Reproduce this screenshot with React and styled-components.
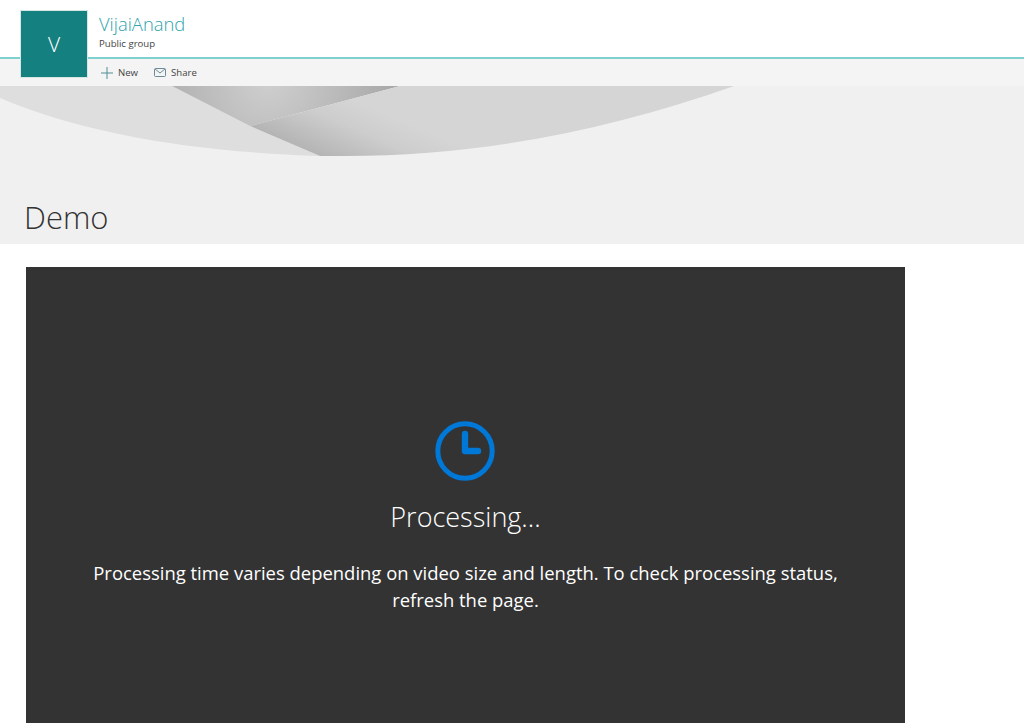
import React from 'react';
import styled, { createGlobalStyle } from 'styled-components';

const GlobalStyle = createGlobalStyle`
  html, body {
    margin: 0;
    height: 100%;
    overflow: hidden;
    background: #fff;
    font-family: "Open Sans", "Noto Sans", sans-serif;
  }
`;

const Page = styled.div`
  width: 1024px;
  height: 723px;
  overflow: hidden;
`;

const Header = styled.header`
  position: relative;
  background: #fff;
`;
const TitleRow = styled.div`
  box-sizing: border-box;
  height: 59px;
  padding: 12px 0 0 99px;
  border-bottom: 2px solid #7fd0cf;
`;
const GroupName = styled.div`
  font-size: 18.4px;
  font-weight: 300;
  line-height: 23px;
  color: #2ea3ac;
`;
const GroupType = styled.div`
  font-size: 9.6px;
  line-height: 14px;
  margin-top: 2px;
  color: #444;
`;
const Logo = styled.div`
  position: absolute;
  left: 20px;
  top: 10px;
  width: 68px;
  height: 68px;
  box-sizing: border-box;
  border: 1px solid #d5e6e5;
  background: #158080;
  color: #fff;
  font-size: 21px;
  font-weight: 300;
  display: flex;
  align-items: center;
  justify-content: center;
`;
const Toolbar = styled.div`
  height: 27px;
  display: flex;
  align-items: center;
  gap: 16px;
  padding-left: 101px;
  background: #f4f4f4;
`;
const ToolButton = styled.div`
  display: flex;
  align-items: center;
  gap: 5px;
  font-size: 9.6px;
  color: #444;
`;

const Banner = styled.section`
  position: relative;
  height: 158px;
  box-sizing: border-box;
  background: #f0f0f0;
  display: flex;
  align-items: flex-end;
  padding: 0 0 6px 24px;
`;
const BannerArt = styled.svg`
  position: absolute;
  left: 0;
  top: 0;
`;
const PageTitle = styled.h1`
  position: relative;
  margin: 0;
  font-size: 31px;
  font-weight: 300;
  line-height: 42px;
  color: #333;
`;

const Content = styled.main`
  padding: 23px 0 0 26px;
`;
const VideoPanel = styled.div`
  width: 879px;
  height: 494px;
  padding-top: 154px;
  box-sizing: border-box;
  background: #333;
  color: #fff;
  display: flex;
  flex-direction: column;
  align-items: center;
  text-align: center;
`;
const ClockWrap = styled.div`
  height: 60px;
  margin-left: -1px;
`;
const ProcessingTitle = styled.div`
  font-size: 27px;
  font-weight: 300;
  line-height: 36px;
  margin-top: 18px;
`;
const ProcessingText = styled.p`
  width: 770px;
  margin: 24px 0 0;
  font-size: 18.45px;
  line-height: 27px;
`;

const PlusIcon = () => (
  <svg width="12" height="12" viewBox="0 0 12 12" fill="none" stroke="#4f8f94" strokeWidth="1">
    <path d="M6 0v12M0 6h12" />
  </svg>
);

const MailIcon = () => (
  <svg width="12" height="10" viewBox="0 0 12 10" fill="none" stroke="#6c8a96" strokeWidth="1">
    <rect x="0.5" y="0.5" width="11" height="8" rx="1" />
    <path d="M1 1l5 4 5-4" />
  </svg>
);

const ClockIcon = () => (
  <svg width="60" height="60" viewBox="0 0 60 60" fill="none" stroke="#0078d7" strokeWidth="5" strokeLinecap="round" strokeLinejoin="round" display="block">
    <circle cx="30" cy="30" r="27.2" />
    <path d="M30 13V30H43" strokeWidth="6.4" />
  </svg>
);

const WaveArt = () => (
  <BannerArt width="1024" height="158" viewBox="0 0 1024 158">
    <defs>
      <radialGradient id="wedge" gradientUnits="userSpaceOnUse" cx="268" cy="-6" r="135">
        <stop offset="0" stopColor="#cfcfcf" />
        <stop offset="0.3" stopColor="#c3c3c3" />
        <stop offset="1" stopColor="#a6a6a6" />
      </radialGradient>
      <linearGradient id="fold" gradientUnits="userSpaceOnUse" x1="285" y1="55" x2="311" y2="-5">
        <stop offset="0" stopColor="#b4b4b4" />
        <stop offset="0.6" stopColor="#cdcdcd" />
        <stop offset="1" stopColor="#d5d5d5" />
      </linearGradient>
    </defs>
    <path d="M0 12V0H172L250 40L320 70C200 66 90 50 0 12Z" fill="#dedede" />
    <path d="M172 0H400L250 40Z" fill="url(#wedge)" />
    <path d="M400 0H734C610 44 480 70 345 70H320L250 40Z" fill="url(#fold)" />
  </BannerArt>
);

export default function App() {
  return (
    <Page>
      <GlobalStyle />
      <Header>
        <TitleRow>
          <GroupName>VijaiAnand</GroupName>
          <GroupType>Public group</GroupType>
        </TitleRow>
        <Toolbar>
          <ToolButton><PlusIcon />New</ToolButton>
          <ToolButton><MailIcon />Share</ToolButton>
        </Toolbar>
        <Logo>V</Logo>
      </Header>
      <Banner>
        <WaveArt />
        <PageTitle>Demo</PageTitle>
      </Banner>
      <Content>
        <VideoPanel>
          <ClockWrap><ClockIcon /></ClockWrap>
          <ProcessingTitle>Processing...</ProcessingTitle>
          <ProcessingText>
            Processing time varies depending on video size and length. To check processing status, refresh the page.
          </ProcessingText>
        </VideoPanel>
      </Content>
    </Page>
  );
}
